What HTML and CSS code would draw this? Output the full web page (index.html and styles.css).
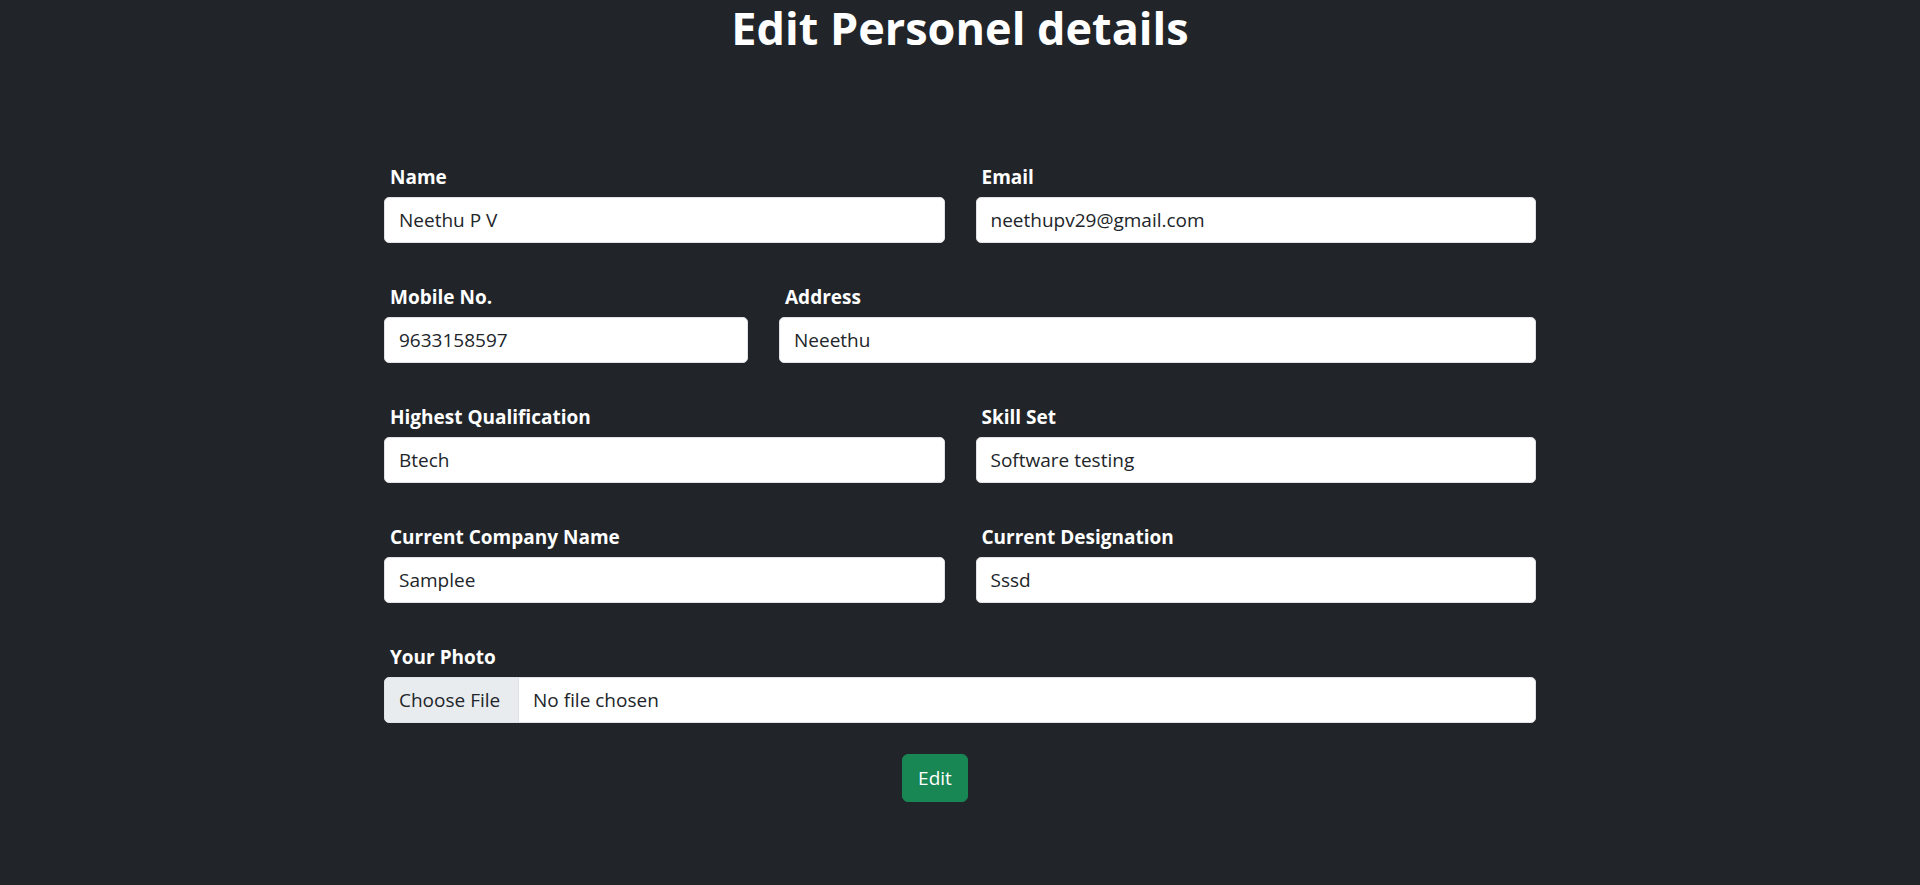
FILE: index.html
```html
<!DOCTYPE html>
<html lang="en">
<head>
<meta charset="utf-8">
<title>Edit Personel details</title>
<link rel="stylesheet" href="styles.css">
</head>
<body>
<h1 class="title">Edit Personel details</h1>
<form class="form">
  <div class="row row-half">
    <div class="field"><label class="label">Name</label><div class="control">Neethu P V</div></div>
    <div class="field"><label class="label">Email</label><div class="control">neethupv29@gmail.com</div></div>
  </div>
  <div class="row row-third">
    <div class="field"><label class="label">Mobile No.</label><div class="control">9633158597</div></div>
    <div class="field"><label class="label">Address</label><div class="control">Neeethu</div></div>
  </div>
  <div class="row row-half">
    <div class="field"><label class="label">Highest Qualification</label><div class="control">Btech</div></div>
    <div class="field"><label class="label">Skill Set</label><div class="control">Software testing</div></div>
  </div>
  <div class="row row-half">
    <div class="field"><label class="label">Current Company Name</label><div class="control">Samplee</div></div>
    <div class="field"><label class="label">Current Designation</label><div class="control">Sssd</div></div>
  </div>
  <div class="row row-full">
    <div class="field"><label class="label">Your Photo</label>
      <div class="control file"><span class="file-btn">Choose File</span><span class="file-name">No file chosen</span></div>
    </div>
  </div>
  <div class="actions"><button type="button" class="btn-edit">Edit</button></div>
</form>
</body>
</html>
```
FILE: styles.css
```css
* { box-sizing: border-box; }
html, body { margin: 0; padding: 0; }
body {
  background: #212529;
  color: #fff;
  font-family: "Open Sans", "Noto Sans", sans-serif;
  height: 885px;
  overflow: hidden;
}
.title {
  margin: 0;
  text-align: center;
  font-size: 45px;
  font-weight: 700;
  line-height: 56px;
}
.form {
  width: 1152px;
  margin: 107px auto 0;
  display: flex;
  flex-direction: column;
  gap: 40px;
}
.row { display: grid; column-gap: 31px; }
.row-half { grid-template-columns: 1fr 1fr; }
.row-third { grid-template-columns: 364px 1fr; }
.row-full { grid-template-columns: 1fr; }
.field { display: flex; flex-direction: column; }
.label {
  display: block;
  font-weight: 700;
  font-size: 19px;
  line-height: 28px;
  height: 28px;
  margin: 0 0 6px 6px;
}
.control {
  height: 46px;
  background: #fff;
  border: 1px solid #dee2e6;
  border-radius: 5px;
  color: #212529;
  font-size: 19px;
  line-height: 44px;
  padding: 0 14px;
  white-space: nowrap;
}
.file { display: flex; padding: 0; overflow: hidden; }
.file-btn {
  background: #e9ecef;
  border-right: 1px solid #dee2e6;
  padding: 0 14px;
  width: 134px;
}
.file-name { padding: 0 14px; }
.actions { display: flex; margin-top: -9px; }
.btn-edit {
  margin-left: 518px;
  width: 66px;
  height: 48px;
  background: #198754;
  border: 1px solid #198754;
  border-radius: 6px;
  color: #fff;
  font-family: inherit;
  font-size: 19px;
  padding: 0;
}
```
